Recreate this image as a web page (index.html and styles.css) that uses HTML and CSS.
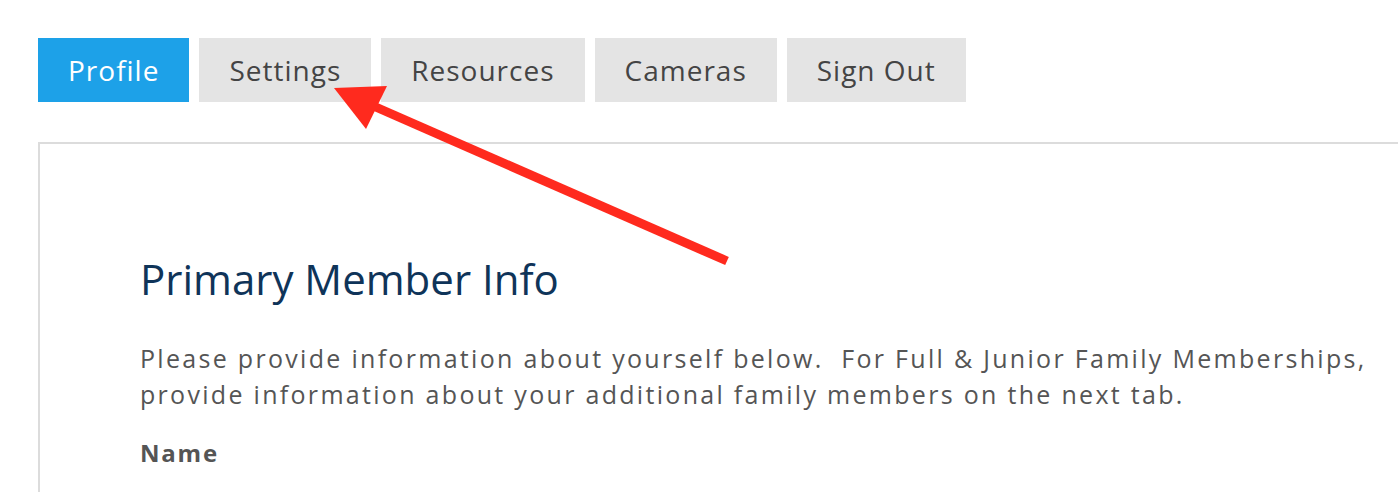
FILE: index.html
```html
<!DOCTYPE html>
<html>
<head>
<meta charset="utf-8">
<link rel="stylesheet" href="styles.css">
</head>
<body>
<div class="page">
  <nav class="tabs">
    <a class="tab active">Profile</a>
    <a class="tab">Settings</a>
    <a class="tab">Resources</a>
    <a class="tab">Cameras</a>
    <a class="tab">Sign Out</a>
  </nav>
  <section class="panel">
    <h1 class="title">Primary Member Info</h1>
    <p class="intro">Please provide information about yourself below.&nbsp; For Full &amp; Junior Family Memberships, provide information about your additional family members on the next tab.</p>
    <div class="label">Name</div>
  </section>
</div>
<svg class="annotation" width="1398" height="492" viewBox="0 0 1398 492">
  <line x1="727" y1="261" x2="362" y2="101" stroke="#ff2a1e" stroke-width="9"/>
  <polygon points="334,88 387,86 366,129" fill="#ff2a1e"/>
</svg>
</body>
</html>
```
FILE: styles.css
```css
html, body {
  margin: 0;
  padding: 0;
  overflow: hidden;
  background: #fff;
}
body {
  font-family: "Open Sans", "Liberation Sans", sans-serif;
  position: relative;
  width: 1398px;
  height: 492px;
}
.page {
  padding: 38px 0 0 38px;
}
.tabs {
  display: flex;
  gap: 10px;
}
.tab {
  display: flex;
  align-items: center;
  height: 64px;
  padding: 0 30px;
  background: #e4e4e4;
  color: #444;
  font-size: 28px;
  letter-spacing: 1px;
}
.tab.active {
  background: #1da1e8;
  color: #fff;
}
.panel {
  margin-top: 40px;
  margin-right: -60px;
  border: 2px solid #dcdcdc;
  border-bottom: none;
  padding: 110px 0 0 100px;
  height: 238px;
  overflow: hidden;
}
.title {
  margin: 0;
  font-size: 42px;
  line-height: 50px;
  font-weight: 400;
  color: #0f3459;
}
.intro {
  margin: 36px 0 0;
  font-size: 25px;
  line-height: 36px;
  color: #555;
  letter-spacing: 2.3px;
  max-width: 1260px;
}
.label {
  margin-top: 23px;
  font-size: 24px;
  line-height: 36px;
  font-weight: 700;
  color: #555;
  letter-spacing: 1.8px;
}
.annotation {
  position: absolute;
  top: 0;
  left: 0;
  pointer-events: none;
}
```
